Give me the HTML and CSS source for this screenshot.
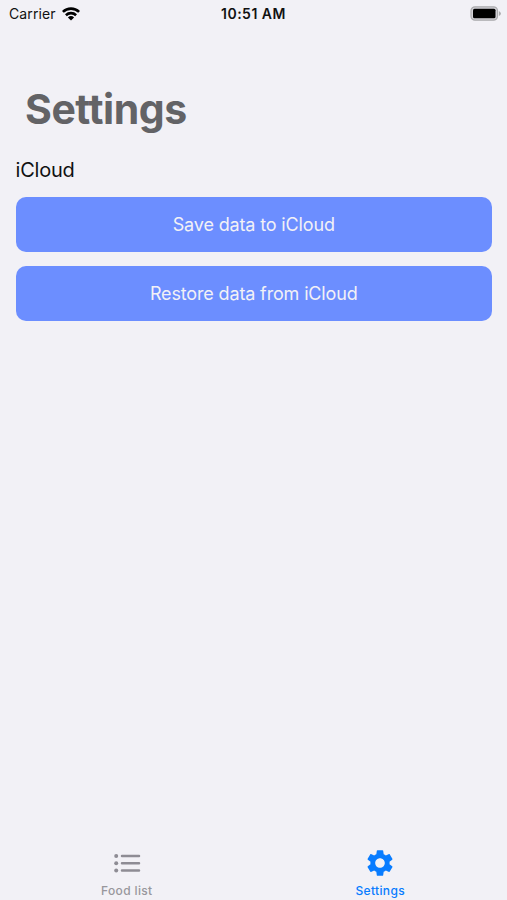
FILE: index.html
```html
<!DOCTYPE html>
<html lang="en">
<head>
<meta charset="utf-8">
<title>Settings</title>
<link rel="stylesheet" href="styles.css">
</head>
<body>
<header class="status">
  <div class="carrier"><span>Carrier</span>
    <svg class="wifi" width="18" height="14" viewBox="0 0 18 14"><g fill="none" stroke="#000" stroke-width="2.6"><path d="M.9 4.9a11.6 11.6 0 0 1 16.2 0"/><path d="M3.9 8.2a7.4 7.4 0 0 1 10.2 0"/></g><path d="M9 13.5 5.9 10.4a4.5 4.5 0 0 1 6.2 0z"/></svg>
  </div>
  <div class="time">10:51 AM</div>
  <svg class="battery" width="31" height="15" viewBox="0 0 31 15"><rect x="1" y=".8" width="26.5" height="13.4" rx="4" fill="#d4d3d8" stroke="#aaaaad" stroke-width="1.2"/><rect x="3" y="2.8" width="22.5" height="9.4" rx="1.5"/><path d="M28.9 5q2 1 2 2.5t-2 2.5z" fill="#aaaaad"/></svg>
</header>
<main>
  <h1>Settings</h1>
  <h2>iCloud</h2>
  <button class="action save">Save data to iCloud</button>
  <button class="action restore">Restore data from iCloud</button>
</main>
<nav class="tabs">
  <a class="tab list">
    <svg width="32" height="32" viewBox="0 0 32 32"><g fill="currentColor"><circle cx="5.2" cy="9" r="2"/><circle cx="5.2" cy="16.2" r="2"/><circle cx="5.2" cy="23.4" r="2"/></g><path d="M11 9h17M11 16.2h17M11 23.4h17" stroke="currentColor" stroke-width="2.5" stroke-linecap="round"/></svg>
    <span>Food list</span>
  </a>
  <a class="tab active">
    <svg width="32" height="32" viewBox="0 0 24 24"><path fill="currentColor" d="M19.14 12.94c.04-.3.06-.61.06-.94 0-.32-.02-.64-.07-.94l2.03-1.58c.18-.14.23-.41.12-.61l-1.92-3.32c-.12-.22-.37-.29-.59-.22l-2.39.96c-.5-.38-1.03-.7-1.62-.94l-.36-2.54c-.04-.24-.24-.41-.48-.41h-3.84c-.24 0-.43.17-.47.41l-.36 2.54c-.59.24-1.13.57-1.62.94l-2.39-.96c-.22-.08-.47 0-.59.22L2.74 8.87c-.12.21-.08.47.12.61l2.03 1.58c-.05.3-.09.63-.09.94s.02.64.07.94l-2.03 1.58c-.18.14-.23.41-.12.61l1.92 3.32c.12.22.37.29.59.22l2.39-.96c.5.38 1.03.7 1.62.94l.36 2.54c.05.24.24.41.48.41h3.84c.24 0 .44-.17.47-.41l.36-2.54c.59-.24 1.13-.56 1.62-.94l2.39.96c.22.08.47 0 .59-.22l1.92-3.32c.12-.22.07-.47-.12-.61l-2.01-1.58zM12 15.6c-1.98 0-3.6-1.62-3.6-3.6s1.62-3.6 3.6-3.6 3.6 1.62 3.6 3.6-1.62 3.6-3.6 3.6z"/></svg>
    <span>Settings</span>
  </a>
</nav>
</body>
</html>
```
FILE: styles.css
```css
* { box-sizing: border-box; }
body {
  margin: 0;
  height: 900px;
  display: flex;
  flex-direction: column;
  overflow: hidden;
  background: #f2f1f6;
  color: #111;
  font-family: Inter, "Liberation Sans", sans-serif;
}
.status {
  height: 27px;
  display: grid;
  grid-template-columns: 1fr auto 1fr;
  align-items: center;
  padding: 0 6px 0 9px;
  font-size: 14px;
  line-height: 27px;
}
.carrier { display: flex; align-items: center; gap: 6px; letter-spacing: 0.1px; }
.time { margin-left: -3px; font-weight: 600; letter-spacing: 0.5px; }
.battery { justify-self: end; }
main { flex: 1; padding: 0 15px 0 15.5px; }
h1 {
  margin: 56px 0 0 9.5px;
  font-size: 41px;
  line-height: 52px;
  font-weight: 700;
  letter-spacing: -0.45px;
  color: #636366;
}
h2 {
  margin: 21px 0 0;
  font-size: 20px;
  line-height: 28px;
  font-weight: 400;
  letter-spacing: -0.2px;
}
.action {
  display: block;
  width: 100%;
  height: 55px;
  margin: 0 0 14px;
  padding: 0;
  border: 0;
  border-radius: 10px;
  background: #6c8eff;
  color: #f2f1f6;
  font: 400 18px/55px Inter, "Liberation Sans", sans-serif;
  letter-spacing: -0.15px;
}
.save { margin-top: 13px; }
.tabs { height: 53px; display: flex; }
.tab {
  flex: 1;
  display: flex;
  flex-direction: column;
  align-items: center;
  font-size: 12px;
  line-height: 16px;
  font-weight: 500;
  letter-spacing: 0.35px;
  color: #98979c;
}
.tab span { margin-top: 4px; }
.list svg { color: #8e8c94; }
.active { color: #087cff; }
```
